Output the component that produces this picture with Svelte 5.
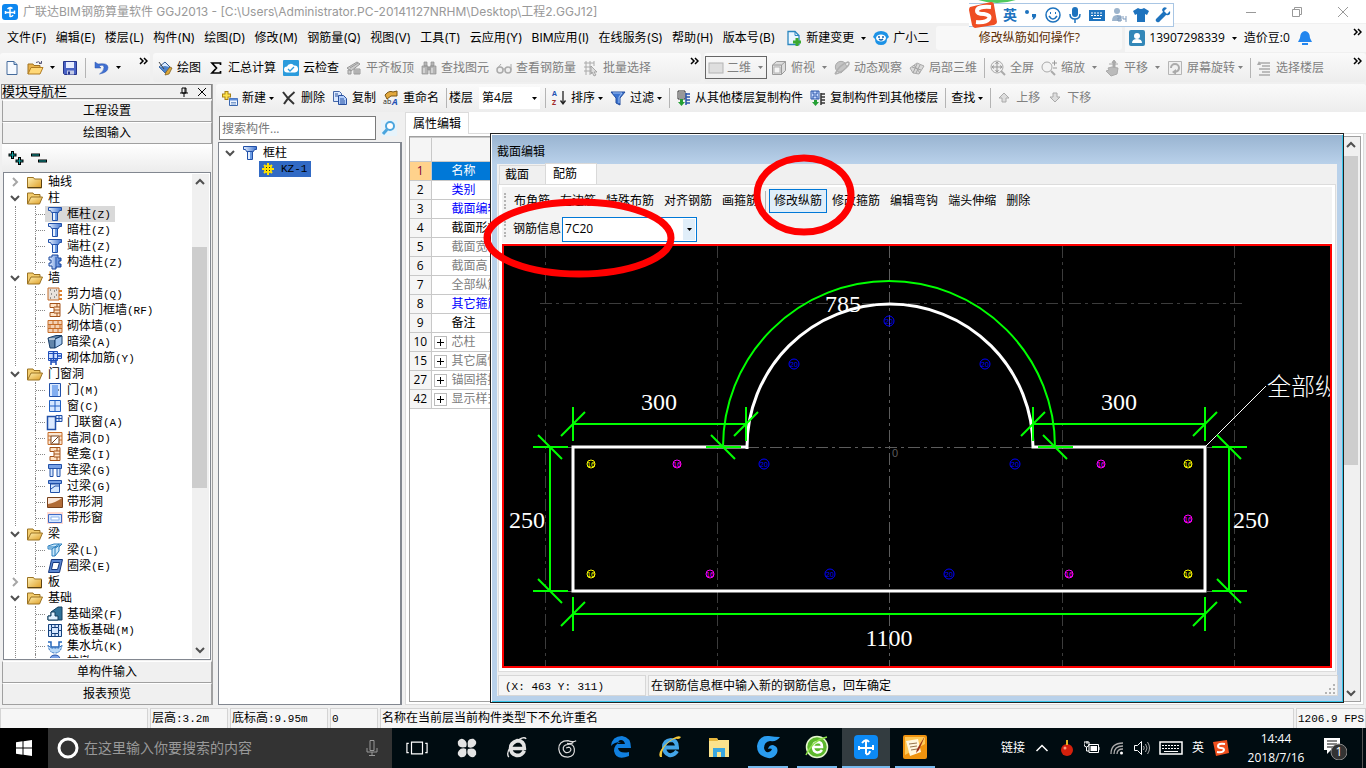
<script>
	let selected = $state('框柱');
	let bar = $state('7C20');
	let search = $state('');
	let tab = $state('配筋');
	let tool = $state('修改纵筋');

	const menus = ['文件(F)', '编辑(E)', '楼层(L)', '构件(N)', '绘图(D)', '修改(M)', '钢筋量(Q)', '视图(V)', '工具(T)', '云应用(Y)', 'BIM应用(I)', '在线服务(S)', '帮助(H)', '版本号(B)'];

	// drawn on a 16 x 16 grid
	const icons = {
		logo: '<rect width="16" height="16" rx="3" fill="#0d87f0"/><path d="M8 3v10M3.500 8.500h9M5.500 5Q8 2.500 10.500 4.500M12.500 6.500v3.500M3.500 7v3M8 12.500q2 .5 3-1.500" stroke="#fff" stroke-width="1.500" fill="none"/>',
		file: '<path d="M3 1.500h7l3 3v10H3z" fill="#f6faff" stroke="#456b9c"/><path d="M10 1.500v3h3" fill="#b9d3f0" stroke="#456b9c"/>',
		open: '<path d="M1 14V4h5l1 1.500h6V8" fill="#e8b24c" stroke="#a17220"/><path d="M1 14l3-6.500h12L13 14z" fill="#ffd877" stroke="#b17c22"/><path d="M9 2.500q3-2 5 1M12 3.500h2.500V1" stroke="#557" fill="none"/>',
		save: '<path d="M1.500 1.500h13v13h-12l-1-1z" fill="#4a63c4" stroke="#26358b"/><path d="M4 2h8v6H4z" fill="#e8edff"/><path d="M5 10.500h7v4H5z" fill="#c3cbe6"/><path d="M6 11.500h2v3H6z" fill="#26358b"/>',
		undo: '<path d="M2 2v6h6L6 6q5-2 5 1.500T6.500 14Q15 12.500 15 7.500T5 4z" fill="#3f6fd2" stroke="#2a55ae" stroke-width=".5"/>',
		draw: '<path d="M2 7l6-5 5 5-5 6z" fill="#dcecff" stroke="#325a94"/><path d="M2 7l6-1 5 1-5 6z" fill="#4d83cc"/><path d="M9 12l4-5 2 1-3 6-4 1z" fill="#ddaa3c" stroke="#775411" stroke-width=".7"/><path d="M2 2l5 7" stroke="#444"/>',
		sum: '<path d="M12.500 5V3H4l4.500 5L4 13h8.500v-2" fill="none" stroke="#000" stroke-width="1.700"/>',
		cloud: '<rect width="16" height="16" rx="1" fill="#2b9bdc"/><path d="M4 12.500a3 3 0 010-6 4 4 0 017-1 3.500 3.500 0 011 7z" fill="#fff"/><path d="M5 9l2 2 4-4" stroke="#2b9bdc" fill="none" stroke-width="1.300"/>',
		flush: '<path d="M1 8l10-6 3 2-9 7zM2 10h3v4H2zM8 9h6v5H8z" fill="#ccc" stroke="#999"/><path d="M4 8l8-5M9 11h4M9 13h4" stroke="#999"/>',
		binocular: '<path d="M3 2h3v4H3zM10 2h3v4h-3zM1 6h6v8H1zM9 6h6v8H9zM7 7h2v3H7z" fill="#b5b5b5" stroke="#8f8f8f" stroke-width=".7"/><path d="M3 8v5M11 8v5" stroke="#eee"/>',
		glasses: '<circle cx="4" cy="10" r="3" fill="#eee" stroke="#aaa" stroke-width="1.500"/><circle cx="12" cy="10" r="3" fill="#eee" stroke="#aaa" stroke-width="1.500"/><path d="M1 9l4-5M9 9h-2M15 10V4" stroke="#aaa" fill="none"/>',
		batch: '<path d="M1 3h10M1 7h8M1 11h7M3 1v14M7 1v14M11 1v5" stroke="#aaa"/><path d="M8 6l6 6h-3l2 3-2 1-2-4-1 2z" fill="#ddd" stroke="#999" stroke-width=".8"/>',
		plane: '<rect x="1" y="3" width="14" height="10" fill="#dedede" stroke="#b4b4b4"/>',
		cube: '<path d="M1.500 5l4-3.500h9v9l-4 4h-9zM1.500 5h9v9.500M10.500 5l4-3.500" fill="#ddd" stroke="#9b9b9b"/><path d="M3 7h6v6H3z" fill="#f5f5f5" stroke="#b4b4b4"/>',
		orbit: '<path d="M3 11a5 5 0 018-8l2 4-6 6z" fill="#c4c4c4" stroke="#aaa"/><path d="M1 14Q5 5 14 2q3 1-2 6T1 14" fill="none" stroke="#b0b0b0" stroke-width="1.500"/>',
		part3d: '<path d="M1 8l7-5 7 3-5 8-6-1z" fill="#d9d9d9" stroke="#aaa"/><path d="M5 5l6 8M8 4l-4 9M3 7l9 3M11 5l-4 8" stroke="#a3a3a3"/>',
		full: '<circle cx="7" cy="7" r="6" fill="#eee" stroke="#aaa"/><path d="M7 2v10M2 7h10M5.500 4L7 2l1.500 2M5.500 10L7 12l1.500-2M4 5.500L2 7l2 1.500M10 5.500L12 7l-2 1.500" stroke="#999" fill="none"/><path d="M11 11l4 4" stroke="#aaa" stroke-width="2"/>',
		zoom: '<circle cx="6" cy="7" r="5" fill="#f4f4f4" stroke="#aaa"/><path d="M10 11l4 4" stroke="#aaa" stroke-width="2"/><path d="M11 3h5M13.500.5v5M12 8h4" stroke="#999"/>',
		pan: '<path d="M4 8l4-1 6 1-1 6-6 2-5-5 3-1z" fill="#bbb" stroke="#aaa"/><path d="M10 0l2 2.500h-1V7H9V2.500H8zM5 4h9" fill="#aaa" stroke="#aaa"/>',
		rotate: '<path d="M1.500 1.500h13v13h-13z" fill="#f0f0f0" stroke="#b5b5b5"/><path d="M4 8a4 4 0 118 0q0 3-4 4" fill="none" stroke="#aaa" stroke-width="2"/><path d="M9 9v6l-4-3z" fill="#aaa"/>',
		floors: '<path d="M3 3h11M6 6h8M3 9h11M6 12h8M3 15h11" stroke="#aaa" stroke-width="1.500"/><path d="M1 5l2-4 2 4z" fill="#aaa"/>',
		create: '<path d="M4.500 1v9M0 5.500h9" stroke="#a78015" stroke-width="4"/><path d="M4.500 2v7M1 5.500h7" stroke="#ffe24d" stroke-width="2"/><path d="M7.500 8.500h8v7h-8z" fill="#eef5ff" stroke="#3a67ae"/><path d="M7.500 8.500h8v2h-8z" fill="#5f8dd8"/><path d="M9 12.500h5M9 14h5" stroke="#7d9dcc"/>',
		remove: '<path d="M2 2q4 6 11 12M13.500 2Q7 7 3 14" stroke="#333" stroke-width="2" fill="none"/>',
		copy: '<path d="M1.500 1.500h6l2 2v8h-8z" fill="#dbe9ff" stroke="#4668a9"/><path d="M6.500 5.500h5l3 3v6h-8z" fill="#b3cffc" stroke="#29509e"/><path d="M8 9h4M8 11h5M8 13h5M3 4h3M3 6h3" stroke="#29509e"/>',
		rename: '<path d="M2 5q4-5 8-3l4-1v5H8L4 9z" fill="#e3a93e" stroke="#7a5615"/><text x="0" y="14" font-size="7" fill="#222">ab</text><text x="9" y="15" font-size="9" font-weight="bold" font-style="italic" fill="#2352b4">A</text>',
		sort: '<text x="1" y="6" font-size="7" font-weight="bold" fill="#2352b4">A</text><text x="1" y="15" font-size="7" font-weight="bold" fill="#a02828">Z</text><path d="M12 1v12M9.500 10.500L12 14l2.500-3.500" stroke="#222" fill="none" stroke-width="1.300"/>',
		filter: '<path d="M1 2h14l-5 6v7l-4-2V8z" fill="#3a73d0" stroke="#234c9c"/><path d="M3 3h9L9 7v6" fill="none" stroke="#a2c4f5"/>',
		copyFrom: '<path d="M3 1h7v8H3z" fill="#fff" stroke="#333"/><path d="M4 3h5M4 5h5M4 7h5" stroke="#333"/><path d="M11 3v12M11 4h4M11 7h4M11 10h4M11 13h4" stroke="#2854a8" stroke-width="1.500"/><path d="M5 9h3v3h2l-3.500 4L3 12h2z" fill="#25a035"/>',
		copyTo: '<path d="M1 1h8v8H1z" fill="#c7d9ff" stroke="#2854a8"/><path d="M3 1v3h4V1M3 9V6h4v3" stroke="#2854a8" fill="none"/><path d="M11 3v12M11 4h4M11 7h4M11 10h4M11 13h4" stroke="#333" stroke-width="1.500"/><path d="M4 10h3v2h2l-3.500 4L2 12h2z" fill="#25a035"/>',
		up: '<path d="M8 3l5 5h-3v4H6V8H3z" fill="#ddd" stroke="#aaa"/>',
		down: '<path d="M8 12L3 7h3V3h4v4h3z" fill="#ddd" stroke="#aaa"/>',
		change: '<path d="M2 1.500h7l4 4v9H2z" fill="#eaf6ff" stroke="#2a86bf" stroke-width="1.300"/><path d="M9 1.500v4h4" fill="none" stroke="#2a86bf"/><path d="M11 8v8M7 12h8" stroke="#3caa30" stroke-width="3"/>',
		robot: '<path d="M2 3q6-4 12 0l2 4-2 2q0 6-6 6T2 9L0 7z" fill="#1c92e6"/><ellipse cx="8" cy="8" rx="5" ry="3.500" fill="#fff"/><path d="M5 7h2M9 7h2M6 9q2 2 4 0" stroke="#1464ad" fill="none" stroke-width="1.300"/>',
		user: '<rect width="16" height="16" rx="2" fill="#3387b8"/><circle cx="8" cy="6" r="3" fill="#fff"/><path d="M3 13q0-4 5-4t5 4z" fill="#fff"/>',
		bell: '<path d="M8 1q5 1 5 7l2 4H1l2-4q0-6 5-7z" fill="#2386ee"/><path d="M5 14h6" stroke="#2386ee" stroke-width="2"/>',
		search: '<rect width="16" height="16" fill="#e6f3fb"/><circle cx="9" cy="6" r="4" fill="#fff" stroke="#4aa5de" stroke-width="2"/><path d="M6 9.500L2 14" stroke="#4aa5de" stroke-width="3"/>',
		folder: '<path d="M.5 3.500h6l1 1.500h7v9H.5z" fill="url(#gold)" stroke="#9a7223"/><path d="M1 13.500h13.500V6" fill="none" stroke="#5b4212"/>',
		folderOpen: '<path d="M.5 14V3h5.500l1 1.500h6V7" fill="#f3cc6c" stroke="#9a7223"/><path d="M.5 14L4 7h11.500L12.500 14z" fill="url(#gold)" stroke="#9a7223"/>',
		column: '<path d="M1.500 1.500h13v3h-2l-1 2h-7l-1-2h-2z" fill="url(#steel)" stroke="#2150a8"/><path d="M5.500 6.500h5v8h-5z" fill="#e5f0ff" stroke="#2150a8"/><path d="M9 7v7" stroke="#6b9be3" stroke-width="2"/>',
		tie: '<path d="M5 1h6v3h3v3h-2v3h2v3H9v2H5v-3H2V9h2V6H2V3h3z" fill="url(#steel)" stroke="#16459c"/><path d="M9 3v11" stroke="#2150a8"/>',
		shear: '<path d="M1 2h11v12H1z" fill="#e9e2dc" stroke="#c66c28"/><path d="M3 4h1M7 5h1M4 8h1M9 9h1M3 12h1M7 11h1M9 4h1" stroke="#444"/><path d="M12 5h3M12 9h3M12 13h3" stroke="#dd802c" stroke-width="2"/>',
		frame: '<path d="M3 1.500h10v13H3v-4h4v-5H3z" fill="#ffe3c5" stroke="#a3531a"/><path d="M7 5h6M7 8h6M7 11h6M10 1v4M10 11v4" stroke="#a3531a"/>',
		brick: '<path d="M1 2.500h14v12H1z" fill="#f3d1b4" stroke="#c66c28"/><path d="M1 6.500h14M1 10.500h14M6 2v4M11 2v4M3 6v4M8 6v4M13 6v4M6 10v4M11 10v4" stroke="#c66c28"/>',
		hidden: '<path d="M1 4l8-2.500h6L8 5v9H3z" fill="#6285a9" stroke="#173c68"/><path d="M8 5l7-3v8l-7 4z" fill="#a4c7ee" stroke="#173c68"/><path d="M2 5h6" stroke="#fff"/>',
		mesh: '<path d="M1.500 3.500h13v5h-13zM1.500 1.500h9v9h-9z" fill="#cfe0ff" stroke="#1f4fbb"/><path d="M4 8v7M9 8v7M4 12h5M6.500 2v9M11 6h3" fill="none" stroke="#1f4fbb" stroke-width="1.500"/>',
		door: '<path d="M2.500 1.500h11v13h-11z" fill="#dceaff" stroke="#2150a8"/><path d="M5 3h6v11H5z" fill="#83aef0"/><path d="M11 8h1" stroke="#123"/>',
		window: '<path d="M2.500 2.500h11v11h-11zM8 2v11M2 8h11" fill="#d5e7ff" stroke="#1f5fc2"/>',
		doorWindow: '<path d="M.5 2.500h8v13h-8z" fill="#dceaff" stroke="#2150a8" stroke-width="1.500"/><path d="M9 1.500h6v6H9zM12 1v6M9 4.500h6" fill="#dceaff" stroke="#2150a8"/>',
		opening: '<path d="M1 2.500h14v12H1zM1 6h3M12 6h3M1 10h3M12 10h3" fill="#fae5d1" stroke="#c66c28"/><path d="M4 6h8v8H4zM5 13l6-6" stroke="#77401b" fill="#fff"/>',
		beamLink: '<path d="M1.500 2.500h13v4h-13z" fill="#7aa2e6" stroke="#2150a8"/><path d="M3 6.500h3v8H3zM10 6.500h3v8h-3z" fill="#d5e7ff" stroke="#2150a8"/>',
		lintel: '<path d="M1.500 2.500h13v3h-13z" fill="#7aa2e6" stroke="#2150a8"/><path d="M3.500 6h9v8.500h-9z" fill="#d5e7ff" stroke="#2150a8"/><path d="M4 11l4-3h4" stroke="#2150a8" fill="none"/>',
		stripHole: '<path d="M.5 3.500h15v10H.5z" fill="#fbe7d9" stroke="#77401b"/><path d="M1 10q7-1 14-6v9H1z" fill="#b06b37"/>',
		stripWindow: '<path d="M0 2h16v12H0z" fill="#ffd9d0"/><path d="M1.500 4.500h13v8h-13z" fill="#d5e7ff" stroke="#3c69c6"/><path d="M4 7h8v3H4z" fill="#fff" stroke="#90b5ee"/>',
		beam: '<path d="M1 4l6-2h8l-3 3v4l-4 5H5V7H1z" fill="#c9e8fb" stroke="#2a7ebd"/><path d="M5 7l7-5M8 14V6l5-3M2 5h8" stroke="#2a7ebd" fill="none"/>',
		ring: '<path d="M4.500 1.500h11l-3 13h-11z" fill="#5a86d0" stroke="#14367c"/><path d="M6 4.500h6.500l-2 7H4.500z" fill="#fff" stroke="#14367c"/>',
		footBeam: '<path d="M1 14v-4h3V6l7-5h4v13z" fill="#2f7197" stroke="#123f5e"/><path d="M1 14v-4h3V6h4v4h3v4z" fill="#e1f2ff" stroke="#123f5e"/>',
		raft: '<path d="M1.500 2.500h13v12h-13zM4.500 5.500h7v6h-7zM1 8.500h3M12 8.500h3M8 2v3M8 12v3M4.500 2v3M11.500 2v3M4.500 12v3M11.500 12v3" fill="#d5e7ff" stroke="#123f7c"/>',
		pit: '<path d="M1 4h3v5h8V4h3" fill="none" stroke="#2668bb" stroke-width="1.500"/><path d="M1 7q1 8 7 8t7-8l-3 3H4z" fill="#b8d9f8" stroke="#2668bb" stroke-dasharray="2 1"/>',
		pier: '<path d="M8 1q5 0 5 5v9H3V6q0-5 5-5z" fill="#7aa2e6" stroke="#2150a8"/>',
		sun: '<path d="M8 2v12M2 8h12M4 4l8 8M12 4l-8 8" stroke="#ffe100" stroke-width="2"/><circle cx="8" cy="8" r="4" fill="#ffe100"/><path d="M6 6h1v1H6zM9 6h1v1H9zM6 9h1v1H6zM9 9h1v1H9z" fill="#222"/>'
	};

	const mainTools = [
		{ icon: 'draw', text: '绘图' },
		{ icon: 'sum', text: '汇总计算' },
		{ icon: 'cloud', text: '云检查' },
		{ icon: 'flush', text: '平齐板顶', off: true },
		{ icon: 'binocular', text: '查找图元', off: true },
		{ icon: 'glasses', text: '查看钢筋量', off: true },
		{ icon: 'batch', text: '批量选择', off: true }
	];

	const viewTools = [
		{ icon: 'cube', text: '俯视', off: true, drop: true },
		{ icon: 'orbit', text: '动态观察', off: true },
		{ icon: 'part3d', text: '局部三维', off: true, sep: true },
		{ icon: 'full', text: '全屏', off: true },
		{ icon: 'zoom', text: '缩放', off: true, drop: true },
		{ icon: 'pan', text: '平移', off: true, drop: true },
		{ icon: 'rotate', text: '屏幕旋转', off: true, tight: true, sep: true },
		{ icon: 'floors', text: '选择楼层', off: true }
	];

	const editTools = [
		{ icon: 'create', text: '新建', tight: true },
		{ icon: 'remove', text: '删除' },
		{ icon: 'copy', text: '复制' },
		{ icon: 'rename', text: '重命名', sep: true }
	];

	const floorTools = [
		{ icon: 'sort', text: '排序', tight: true },
		{ icon: 'filter', text: '过滤', tight: true, sep: true },
		{ icon: 'copyFrom', text: '从其他楼层复制构件' },
		{ icon: 'copyTo', text: '复制构件到其他楼层', sep: true },
		{ text: '查找', tight: true, sep: true },
		{ icon: 'up', text: '上移', off: true },
		{ icon: 'down', text: '下移', off: true }
	];

	const tree = [
		{ name: '轴线' },
		{ name: '柱', items: [['框柱', 'Z', 'column'], ['暗柱', 'Z', 'column'], ['端柱', 'Z', 'column'], ['构造柱', 'Z', 'tie']] },
		{ name: '墙', items: [['剪力墙', 'Q', 'shear'], ['人防门框墙', 'RF', 'frame'], ['砌体墙', 'Q', 'brick'], ['暗梁', 'A', 'hidden'], ['砌体加筋', 'Y', 'mesh']] },
		{ name: '门窗洞', items: [['门', 'M', 'door'], ['窗', 'C', 'window'], ['门联窗', 'A', 'doorWindow'], ['墙洞', 'D', 'opening'], ['壁龛', 'I', 'frame'], ['连梁', 'G', 'beamLink'], ['过梁', 'G', 'lintel'], ['带形洞', '', 'stripHole'], ['带形窗', '', 'stripWindow']] },
		{ name: '梁', items: [['梁', 'L', 'beam'], ['圈梁', 'E', 'ring']] },
		{ name: '板' },
		{ name: '基础', items: [['基础梁', 'F', 'footBeam'], ['筏板基础', 'M', 'raft'], ['集水坑', 'K', 'pit'], ['柱墩', 'Y', 'pier']] }
	];

	const props = [
		[1, '名称', 'active'],
		[2, '类别', 'key'],
		[3, '截面编辑', 'key'],
		[4, '截面形状', ''],
		[5, '截面宽', 'dim'],
		[6, '截面高', 'dim'],
		[7, '全部纵筋', 'dim'],
		[8, '其它箍筋', 'key'],
		[9, '备注', ''],
		[10, '芯柱', 'dim', true],
		[15, '其它属性', 'dim', true],
		[27, '锚固搭接', 'dim', true],
		[42, '显示样式', 'dim', true]
	];

	const barTools = ['布角筋', '左边筋', '特殊布筋', '对齐钢筋', '画箍筋', '修改纵筋', '修改箍筋', '编辑弯钩', '端头伸缩', '删除'];

	// x, y, colour, diameter
	const rebars = [
		[591, 464, '#ff0', 16], [677, 464, '#f0f', 16], [764, 464, '#00f', 20],
		[591, 574, '#ff0', 16], [710, 574, '#f0f', 16], [830, 574, '#00f', 20],
		[949, 574, '#00f', 20], [1069, 574, '#f0f', 16], [1188, 574, '#ff0', 16],
		[1015, 464, '#00f', 20], [1101, 464, '#f0f', 16], [1188, 464, '#ff0', 16],
		[1188, 519, '#f0f', 16], [794, 364, '#00f', 20], [889, 321, '#00f', 20], [985, 364, '#00f', 20]
	];

	const ticksAcross = [[573, 424], [746, 424], [1033, 424], [1205, 424], [573, 614], [1205, 614]];
	const ticksDown = [[550, 447], [723, 447], [1055, 447], [1229, 447], [550, 591], [1229, 591]];

	// 24 x 24 grid
	const pinned = [
		['任务视图', '<path d="M6 5.500h12v13H6zM3 7H1v10h2M21 7h2v10h-2" fill="none" stroke="#fff" stroke-width="1.300"/>'],
		['四叶草', '<path d="M11 11Q1 13 2 5q3-5 7-2 4 3 2 8zM13 11Q11 1 19 2q5 3 2 7-3 4-8 2zM13 13q10-2 9 6-3 5-7 2-4-3-2-8zM11 13q2 10-6 9-5-3-2-7 3-4 8-2z" fill="#e4e4e4"/>'],
		['浏览器', '<path d="M20 15q-3 6-9 5-6-2-6-8t7-8q8 0 8 8.500H6" fill="none" stroke="#e4e4e4" stroke-width="4"/><path d="M3 22Q-1 16 9 7T22 2" fill="none" stroke="#e4e4e4" stroke-width="1.500"/>'],
		['G', '<path d="M22 4q-4 2-9 0-10 0-10 9 1 9 10 9 8-1 7-9-1-6-7-5-6 1-5 6 2 5 7 2 3-3-1-5l-3 1M19 6q-3 2-7 1" fill="none" stroke="#ddd" stroke-width="1.300"/>']
	];
	const running = [
		['Edge', '<path d="M2 11Q3 1 13 1q9 1 9 12H9q1 6 11 4v4Q7 26 5 16 5 9 12 7q-7 0-10 4zm7-2h7q-1-4-4-4t-3 4z" fill="#1080e0"/>'],
		['IE', '<path d="M19 16q-3 5-8 4-5-2-5-8t7-7q6 0 6 7.500H7" fill="none" stroke="#43a5e8" stroke-width="4"/><path d="M2 22Q-1 17 9 8T23 2q-1 2-3 2-5-1-11 5T4 22z" fill="#f6c93a"/>'],
		['文件夹', '<path d="M2 3h8l1 2h11v17H2z" fill="#fbe38c"/><path d="M2 3h8l1 3H2z" fill="#e7b73d"/><path d="M6 22v-9h12v9h-4v-5h-4v5z" fill="#3aa7e0"/>'],
		['广联达', '<path d="M24 2q-3 5-10 4-6 1-6 7 1 5 5 4 2 0 3-3-2-1-4 0 1-4 5-4 6 2 4 8-3 6-9 5Q1 21 1 11 3 0 13 1q6 1 11 1z" fill="#2a9df0"/>', 'open'],
		['360', '<circle cx="12" cy="12" r="10.500" fill="#5cb82c" stroke="#e4f6cf" stroke-width="1.500"/><path d="M17 15q-2 3-5 2.500-4-1-4-5.500t5-5q4 0 4 5H8" fill="none" stroke="#fff" stroke-width="2.500"/><path d="M1 20Q8 5 22 2" fill="none" stroke="#8de04c" stroke-width="1.500"/>', 'open'],
		['GGJ', '<rect width="24" height="24" rx="4" fill="#0c8af5"/><path d="M12 5v14M5 13h14M8 8q4-5 7-1M19 10v5M5 11v4M12 19q3 1 4-3" fill="none" stroke="#fff" stroke-width="2"/>', 'open front'],
		['便笺', '<rect width="24" height="24" rx="2" fill="#ef930f"/><path d="M2 2h20v7L2 20z" fill="#ffc957"/><path d="M3 6l12-2 3 13-11 4z" fill="#fff7df"/><path d="M6 9l8-1M7 12l7-1M8 15l6-1" stroke="#96744d"/><path d="M22 1L14 14l-1 4 3-3z" fill="#9c3015"/>', 'open']
	];
</script>

{#snippet glyph(name)}
	<svg class="glyph" viewBox="0 0 16 16" aria-hidden="true">{@html icons[name]}</svg>
{/snippet}

{#snippet caret()}
	<svg class="caret" viewBox="0 0 5 3" aria-hidden="true"><path d="M0 0h5L2.500 3z" fill="currentColor" /></svg>
{/snippet}

{#snippet chevron(d)}
	<svg class="chevron" viewBox="0 0 16 16" aria-hidden="true"><path {d} fill="none" stroke="#505050" stroke-width="2" /></svg>
{/snippet}

{#snippet more()}
	<button class="more" aria-label="更多"><svg viewBox="0 0 9 8"><path d="M1 1l3 3-3 3M5 1l3 3-3 3" fill="none" stroke="#000" stroke-width="1.500" /></svg></button>
{/snippet}

{#snippet tools(list)}
	{#each list as t}
		<button class="tool" class:off={t.off}>
			{#if t.icon}{@render glyph(t.icon)}{/if}
			<span>{t.text}</span>
			{#if t.drop || t.tight}<i class:tight={t.tight}>{@render caret()}</i>{/if}
		</button>
		{#if t.sep}<span class="sep"></span>{/if}
	{/each}
{/snippet}

<svg class="defs" aria-hidden="true">
	<linearGradient id="gold" x2="1" y2="1"><stop stop-color="#fff1b4" /><stop offset="1" stop-color="#dd9d24" /></linearGradient>
	<linearGradient id="steel" x2="1"><stop stop-color="#e6f0ff" /><stop offset="1" stop-color="#3f74cf" /></linearGradient>
</svg>

<div class="app">
	<header class="title">
		{@render glyph('logo')}
		<h1>广联达BIM钢筋算量软件 GGJ2013 - [C:\Users\Administrator.PC-20141127NRHM\Desktop\工程2.GGJ12]</h1>
		<div class="window-buttons">
			<button aria-label="最小化"><svg viewBox="0 0 12 12"><path d="M1 6.500h10" /></svg></button>
			<button aria-label="还原"><svg viewBox="0 0 12 12"><path d="M1.500 3.500h7v7h-7zM3.500 3.500v-2h7v7h-2" /></svg></button>
			<button aria-label="关闭"><svg viewBox="0 0 12 12"><path d="M1 1l10 10M11 1L1 11" /></svg></button>
		</div>
		<div class="ime">
			<svg class="sogou" viewBox="0 0 28 26" aria-hidden="true">
				<circle cx="28" cy="-59" r="60" fill="#4fc95d" />
				<path d="M1 5l21-5q3 0 3 3l3 17q0 2-3 3L6 26q-2 0-3-3L0 8q0-2 1-3z" fill="#ef4e23" />
				<path d="M22 5Q8 4 8 9q0 3 7 3 7 1 5 5-3 4-13 3" fill="none" stroke="#fff" stroke-width="4" />
			</svg>
			<b>英</b>
			<svg viewBox="0 0 16 16"><circle cx="4" cy="5" r="2" /><path d="M9 7h4q1 4-4 6 2-3 0-3z" /></svg>
			<svg viewBox="0 0 16 16"><circle cx="8" cy="8" r="7" fill="none" stroke="#1e73be" stroke-width="1.500" /><path d="M5 5h1v2H5zM10 5h1v2h-1z" /><path d="M4 9q4 6 8 0" fill="none" stroke="#1e73be" stroke-width="1.500" /></svg>
			<svg viewBox="0 0 16 16"><rect x="5" y="0" width="6" height="10" rx="3" /><path d="M3 7q0 5 5 5t5-5M8 12v4" fill="none" stroke="#1e73be" stroke-width="1.500" /></svg>
			<svg viewBox="0 0 16 16"><path d="M0 3h16v11H0z" /><path d="M2 6h12M2 8.500h12" stroke="#fff" stroke-dasharray="2 1" /><path d="M4 11.500h8" stroke="#fff" /></svg>
			<svg viewBox="0 0 16 16"><circle cx="6" cy="4" r="3" fill="#9db4cc" /><path d="M1 14q0-6 5-6t5 6z" fill="#9db4cc" /><path d="M6 9h4v2H7v3h3M12 9v3h3V9M15 12v3" fill="none" stroke="#7e9abb" /></svg>
			<svg viewBox="0 0 16 16"><path d="M5 1q3 2 6 0l5 3-2 4-2-1v8H4V7L2 8 0 4z" /></svg>
			<svg viewBox="0 0 16 16"><path d="M15 4l-3 3-3-3 3-3Q8-1 7 3l1 2-7 7q-1 2 1 3t3-1l6-6q5 1 4-4z" /></svg>
		</div>
	</header>

	<nav class="menus">
		<div class="menu-list">
			{#each menus as m}<button>{m}</button>{/each}
		</div>
		<button class="tool change">{@render glyph('change')}<span>新建变更</span><i>{@render caret()}</i></button>
		<button class="tool">{@render glyph('robot')}<span>广小二</span></button>
		<a class="tip" href="#help">修改纵筋如何操作?</a>
		<div class="account">
			<button class="tool">{@render glyph('user')}<span>13907298339</span><i>{@render caret()}</i></button>
			<span class="beans">造价豆:0</span>
			{@render glyph('bell')}
			{@render more()}
		</div>
	</nav>

	<div class="toolbars">
		<div class="strip files">
			<button aria-label="新建工程">{@render glyph('file')}</button>
			<button aria-label="打开">{@render glyph('open')}{@render caret()}</button>
			<button aria-label="保存">{@render glyph('save')}</button>
			<span class="sep"></span>
			<button aria-label="撤销">{@render glyph('undo')}{@render caret()}</button>
			{@render more()}
		</div>
		<div class="strip main-tools">{@render tools(mainTools)}{@render more()}</div>
		<div class="strip view-tools">
			<label class="view-mode">
				{@render glyph('plane')}
				<select aria-label="视图模式"><option>二维</option></select>
				{@render caret()}
			</label>
			{@render tools(viewTools)}
			{@render more()}
		</div>
	</div>

	<main>
		<aside>
			<div class="aside-title">
				<span>模块导航栏</span>
				<button aria-label="固定"><svg viewBox="0 0 10 10"><path d="M3 1h4v5H3zM1 6h8M5 6v4M6 1v5" fill="none" stroke="#000" /></svg></button>
				<button aria-label="关闭"><svg viewBox="0 0 10 10"><path d="M1 1l8 8M9 1L1 9" fill="none" stroke="#000" /></svg></button>
			</div>
			<button class="section">工程设置</button>
			<button class="section">绘图输入</button>
			<div class="tree-tools">
				<button aria-label="全部展开"><svg viewBox="0 0 16 16"><path d="M4.500 1v8M.5 5h8M11.500 7v8M7.500 11h8" stroke="#000" stroke-width="3" /><path d="M4.500 2v6M1.500 5h6M11.500 8v6M8.500 11h6" stroke="#12a5a5" /></svg></button>
				<button aria-label="全部折叠"><svg viewBox="0 0 16 16"><path d="M0 5h9M7 11h9" stroke="#000" stroke-width="3" /><path d="M1 5h7M8 11h7" stroke="#12a5a5" /></svg></button>
			</div>
			<div class="tree-box">
				<ul class="tree">
					{#each tree as group}
						<li>
							<div class="row">
								{#if group.items}
									{@render chevron('M4 6l4 4 4-4')}{@render glyph('folderOpen')}
								{:else}
									<svg class="chevron" viewBox="0 0 16 16"><path d="M6 4l4 4-4 4" fill="none" stroke="#a6a6a6" stroke-width="2" /></svg>{@render glyph('folder')}
								{/if}
								<span class="name">{group.name}</span>
							</div>
							{#if group.items}
								<ul>
									{#each group.items as [name, key, icon]}
										<li>
											<button class="leaf" class:selected={selected === name} onclick={() => selected = name}>
												{@render glyph(icon)}
												<span class="name">{name}{#if key}<small>({key})</small>{/if}</span>
											</button>
										</li>
									{/each}
								</ul>
							{/if}
						</li>
					{/each}
				</ul>
				<div class="scroll">
					{@render chevron('M4 10l4-4 4 4')}
					<span class="thumb tree-thumb"></span>
					{@render chevron('M4 6l4 4 4-4')}
				</div>
			</div>
			<button class="section">单构件输入</button>
			<button class="section">报表预览</button>
		</aside>

		<div class="work">
			<div class="strip edit-tools">
				{@render tools(editTools)}
				<label class="floor">
					楼层
					<span class="combo"><select><option>第4层</option></select>{@render caret()}</span>
				</label>
				<span class="sep"></span>
				{@render tools(floorTools)}
			</div>

			<div class="panes">
				<section class="components">
					<div class="search">
						<input bind:value={search} placeholder="搜索构件..." aria-label="搜索构件" />
						<button aria-label="搜索">{@render glyph('search')}</button>
					</div>
					<div class="component-tree">
						<div class="row">{@render chevron('M4 6l4 4 4-4')}{@render glyph('column')}<span class="name">框柱</span></div>
						<button class="instance">{@render glyph('sun')}<small>KZ-1</small></button>
					</div>
				</section>

				<section class="properties">
					<div class="tab-bar"><button>属性编辑</button></div>
					<div class="sheet">
						<div class="grid">
							<table>
								<thead><tr><th></th><th></th></tr></thead>
								<tbody>
									{#each props as [no, name, kind, group]}
										<tr class={kind}>
											<th scope="row">{no}</th>
											<td><span class="plus">{#if group}<button aria-label="展开"><svg viewBox="0 0 11 11"><path d="M2 5.500h7M5.500 2v7" stroke="#000" /></svg></button>{/if}</span>{name}</td>
										</tr>
									{/each}
								</tbody>
							</table>
							<div class="scroll">
								{@render chevron('M4 10l4-4 4 4')}
								<span class="thumb grid-thumb"></span>
								{@render chevron('M4 6l4 4 4-4')}
							</div>
						</div>
					</div>

					<div class="dialog" role="dialog" aria-labelledby="dialog-title">
						<h2 id="dialog-title">截面编辑</h2>
						<div class="client">
							<div class="tabs">
								{#each ['截面', '配筋'] as t}
									<button class:on={tab === t} onclick={() => tab = t}>{t}</button>
								{/each}
							</div>
							<div class="page">
								<div class="bar-tools">
									<span class="grip"></span>
									{#each barTools as t}
										{#if t === '修改纵筋'}<span class="sep"></span>{/if}
										<button class:on={tool === t} onclick={() => tool = t}>{t}</button>
									{/each}
								</div>
								<div class="bar-info">
									<span class="grip"></span>
									<label for="bar">钢筋信息</label>
									<div class="bar-input">
										<input id="bar" bind:value={bar} />
										<button aria-label="展开列表">{@render caret()}</button>
									</div>
								</div>
								<svg class="canvas" viewBox="504 246 826 420" preserveAspectRatio="xMidYMid slice">
									<g fill="none" stroke="#3c3c3c" stroke-dasharray="12 4 3 4">
										<path d="M545.500 246v420M717.500 246v420M1062.500 246v420M1234.500 246v420M540 303.500h704" />
										<path d="M889.500 246v420M540 447.500h704M540 591.500h704" stroke="#5c5c5c" />
									</g>
									<text class="origin" x="892" y="457">0</text>
									<path d="M747 447H573v144h632V447h-172A143 143 0 00747 447v2" fill="none" stroke="#fff" stroke-width="3" />
									<path d="M1206 446l60-60" stroke="#fff" />
									<g fill="none" stroke="#0f0" stroke-width="2">
										<path d="M723 447A166 166 0 011055 447M573 424h173M1033 424h172M573 614h632M550 447v144M1229 447v144" />
										{#each ticksAcross as [x, y]}
											<path d="M{x} {y - 17}v34M{x - 12} {y + 12}l24-24" />
										{/each}
										{#each ticksDown as [x, y]}
											<path d="M{x - 17} {y}h35M{x - 12} {y - 12}l24 24" />
										{/each}
									</g>
									{#each rebars as [x, y, color, size]}
										<circle cx={x} cy={y} r={size === 20 ? 5 : 4} fill="none" stroke={color} />
										<text class="size" {x} y={y + 3} fill={color}>{size}</text>
									{/each}
									<g class="dims">
										<text x="843" y="312">785</text>
										<text x="659" y="410">300</text>
										<text x="1119" y="410">300</text>
										<text x="527" y="528">250</text>
										<text x="1251" y="528">250</text>
										<text x="889" y="646">1100</text>
										<text class="note" x="1267" y="395">全部纵筋</text>
									</g>
								</svg>
							</div>
							<div class="dialog-status">
								<span class="cell"><small>(X: 463 Y: 311)</small></span>
								<span class="cell">在钢筋信息框中输入新的钢筋信息，回车确定</span>
								<svg class="resize" viewBox="0 0 12 12" aria-hidden="true"><path d="M9 1h2M9 5h2M5 5h2M9 9h2M5 9h2M1 9h2" stroke="#b4b4b4" stroke-width="2" /></svg>
							</div>
						</div>
						<svg class="marks" viewBox="0 0 400 160" aria-hidden="true">
							<ellipse cx="89" cy="105" rx="92" ry="36" />
							<ellipse cx="314" cy="62" rx="47" ry="37" />
						</svg>
					</div>
				</section>
			</div>
		</div>
	</main>

	<footer class="status">
		<span></span>
		<span>层高<small>:3.2m</small></span>
		<span>底标高<small>:9.95m</small></span>
		<span><small>0</small></span>
		<span>名称在当前层当前构件类型下不允许重名</span>
		<span><small>1206.9 FPS</small></span>
	</footer>

	<div class="taskbar">
		<button class="start" aria-label="开始"><svg viewBox="0 0 16 16"><path d="M0 2.300l6.500-1v6.200H0zM7.500 1.200L16 0v7.500H7.500zM0 8.500h6.500v6.200l-6.500-1zM7.500 8.500H16V16l-8.500-1.200z" fill="#fff" /></svg></button>
		<label class="cortana">
			<svg class="ring" viewBox="0 0 24 24"><circle cx="12" cy="12" r="9" fill="none" stroke="#fff" stroke-width="3" /></svg>
			<input placeholder="在这里输入你要搜索的内容" aria-label="搜索" />
			<svg class="mic" viewBox="0 0 12 16"><path d="M4 .5h4v10H4zM1 8v4h10V8M6 12v3.500M3 15.500h6" fill="none" stroke="#999" /></svg>
		</label>
		<div class="pinned">
			{#each pinned as [name, shape]}
				<button aria-label={name}><svg viewBox="0 0 24 24">{@html shape}</svg></button>
			{/each}
		</div>
		<div class="running">
			{#each running as [name, shape, state]}
				<button class={state} aria-label={name}><svg viewBox="0 0 24 24">{@html shape}</svg></button>
			{/each}
		</div>
		<div class="tray">
			<span>链接</span>
			<svg viewBox="0 0 16 16"><path d="M2.500 11L8 5.500l5.500 5.500" fill="none" stroke="#fff" stroke-width="1.500" /></svg>
			<svg viewBox="0 0 16 16"><circle cx="8" cy="10" r="6" fill="#d4200c" /><path d="M8 5V0" stroke="#e6b422" stroke-width="2" /><circle cx="6" cy="8" r="1.500" fill="#ff9a80" /></svg>
			<svg viewBox="0 0 16 16"><path d="M5 4.500h9.500v8H5zM15 7v3M3 1v3M0 2h5v2Q5 7 2.500 7 0 7 0 4zM2.500 7v4H5" fill="none" stroke="#fff" /><path d="M6.500 6H13v5H6.500z" fill="#fff" /></svg>
			<svg viewBox="0 0 16 16"><path d="M2 14Q2 3 14 3M5 14q0-8 9-8M8 14q0-5 6-5" fill="none" stroke="#aaa" stroke-width="1.300" /><circle cx="12.500" cy="13" r="1.500" fill="#fff" /></svg>
			<svg viewBox="0 0 16 16"><path d="M.5 5.500h3l4-4v13l-4-4h-3z" fill="none" stroke="#fff" /><path d="M9.500 6q1.500 2 0 4M11.500 4q3 4 0 8M13.500 2q4 6 0 12" fill="none" stroke="#aaa" /></svg>
			<svg class="keys" viewBox="0 0 24 14"><path d="M1 1h22v12H1z" fill="none" stroke="#fff" stroke-width="1.500" /><path d="M3 4.500h18M3 7.500h18" stroke="#fff" stroke-dasharray="2 1" /><path d="M5 10.500h14" stroke="#fff" /></svg>
			<span>英</span>
			<svg viewBox="0 0 16 16"><path d="M0 2l14-2 2 13-13 3z" fill="#f0501e" /><path d="M12 4Q5 3 5 6q0 2 3 2t3 2q-1 3-7 2" fill="none" stroke="#fff" stroke-width="2" /></svg>
			<time>14:44<br />2018/7/16</time>
			<button class="notice" aria-label="通知"><svg viewBox="0 0 24 24"><path d="M1 2h16v12H8l-4 4v-4H1z" fill="#fff" /><path d="M4 5h10M4 8h10M4 11h10" stroke="#111" /><circle cx="16" cy="16" r="8" fill="#333" stroke="#888" /><text x="16" y="20" fill="#fff" font-size="12" text-anchor="middle">1</text></svg></button>
		</div>
	</div>
</div>

<style>
	:global(body) {
		margin: 0;
		background: #f0f0f0;
	}

	.app {
		display: flex;
		flex-direction: column;
		height: 100vh;
		overflow: hidden;
		font: 12px/16px "Open Sans", "Noto Sans CJK SC", sans-serif;
		color: #000;
		white-space: nowrap;
	}

	.app :global(*) { box-sizing: border-box; }

	button {
		display: flex;
		align-items: center;
		margin: 0;
		padding: 0;
		border: 0;
		background: none;
		font: inherit;
		color: inherit;
	}

	input, select {
		min-width: 0;
		margin: 0;
		padding: 0;
		border: 0;
		outline: 0;
		border-radius: 0;
		background: none;
		font: inherit;
		color: inherit;
		appearance: none;
	}

	ul {
		margin: 0;
		padding: 0;
		list-style: none;
	}

	svg {
		display: block;
		flex: none;
	}

	small { font: 11px/16px "Liberation Mono", monospace; }

	.defs {
		position: absolute;
		width: 0;
		height: 0;
	}

	.glyph, .chevron {
		width: 16px;
		height: 16px;
		overflow: visible;
	}

	.caret {
		width: 5px;
		height: 3px;
	}

	/* title */
	.title {
		position: relative;
		display: flex;
		flex: none;
		align-items: center;
		gap: 5px;
		height: 23px;
		padding-left: 2px;
		background: #fff;
	}

	h1 {
		flex: 1;
		margin: 0;
		font: 12px/16px Inter, "Noto Sans CJK SC", sans-serif;
		color: #999;
	}

	.window-buttons { display: flex; }

	.window-buttons button {
		justify-content: center;
		width: 46px;
		height: 22px;
	}

	.window-buttons svg {
		width: 12px;
		height: 12px;
		fill: none;
		stroke: #999;
	}

	.ime {
		position: absolute;
		top: 3px;
		right: 192px;
		display: flex;
		align-items: center;
		gap: 6px;
		height: 24px;
		padding-right: 2px;
		border: 1px solid #a9c6e4;
		border-left: 0;
		background: #fff;
		color: #1e73be;
		z-index: 1;
	}

	.ime svg {
		width: 16px;
		height: 16px;
		fill: #1e73be;
	}

	.ime .sogou {
		width: 28px;
		height: 26px;
		overflow: visible;
	}

	.ime b { font-size: 14px; }

	/* menus and tool strips */
	.menus {
		display: flex;
		flex: none;
		align-items: center;
		height: 30px;
		padding-left: 7px;
	}

	.menu-list {
		display: flex;
		gap: 9px;
		font-family: Inter, "Noto Sans CJK SC", sans-serif;
	}

	.tool {
		height: 24px;
		margin-right: 7px;
	}

	.tool .glyph { margin-right: 4px; }

	.tool i {
		width: 12px;
		padding-left: 7px;
	}

	.tool i.tight {
		width: 8px;
		padding-left: 3px;
	}

	.change { margin-left: 11px; }

	.tip {
		width: 186px;
		padding: 4px 0;
		border-radius: 3px;
		background: #f8f8f8;
		color: #5c2c00;
		text-align: center;
		text-decoration: none;
	}

	.account {
		display: flex;
		flex: 1;
		align-items: center;
		height: 28px;
		margin-left: 3px;
		padding: 0 4px;
		background: #f8f8f8;
	}

	.beans { margin-right: 7px; }

	.more {
		align-self: flex-start;
		margin: 4px 0 0 auto;
	}

	.more svg {
		width: 9px;
		height: 8px;
	}

	.toolbars {
		display: flex;
		flex: none;
		gap: 3px;
		height: 30px;
		padding-bottom: 1px;
	}

	.strip {
		display: flex;
		align-items: center;
		border-radius: 3px;
		background: linear-gradient(#fafafa, #ededed);
	}

	.sep {
		width: 1px;
		height: 20px;
		margin-right: 5px;
		background: #b4b4b4;
	}

	.files {
		width: 150px;
		padding: 0 2px 0 4px;
		gap: 7px;
	}

	.files button { gap: 7px; }
	.files .sep { margin: 0; }

	.main-tools {
		width: 548px;
		padding: 0 2px 0 4px;
	}

	.view-tools {
		flex: 1;
		padding: 0 4px 0 1px;
	}

	.off { color: #808080; }

	.view-mode {
		display: flex;
		align-items: center;
		width: 62px;
		height: 23px;
		margin-right: 4px;
		padding: 0 3px 0 2px;
		border: 1px solid #666;
		color: #808080;
	}

	.view-mode select {
		flex: 1;
		margin-left: 3px;
	}

	/* left panel */
	main {
		display: flex;
		flex: 1;
		gap: 3px;
		min-height: 0;
		padding: 1px 0 3px;
	}

	aside {
		display: flex;
		flex: none;
		flex-direction: column;
		width: 213px;
		padding: 0 0 0 1px;
		border-right: 1px solid #a0a0a0;
	}

	.aside-title {
		display: flex;
		align-items: center;
		gap: 8px;
		height: 15px;
		margin-bottom: 1px;
		padding-right: 4px;
		border: 1px solid #888;
		font-size: 13px;
		line-height: 13px;
	}

	.aside-title span { flex: 1; }

	.aside-title svg {
		width: 10px;
		height: 10px;
	}

	.section {
		flex: none;
		justify-content: center;
		height: 22px;
		margin-left: 1px;
		border: 1px solid #a0a0a0;
		border-top-color: #fff;
		background: #f0f0f0;
	}

	.tree-tools {
		display: flex;
		flex: none;
		gap: 7px;
		height: 28px;
		margin-left: 1px;
		padding-left: 6px;
		background: linear-gradient(#fff, #ececec);
	}

	.tree-tools svg {
		width: 16px;
		height: 16px;
	}

	.tree-box {
		display: flex;
		flex: 1;
		min-height: 0;
		margin: 0 1px 1px 2px;
		padding: 1px;
		border: 1px solid #828790;
		background: #fff;
	}

	.tree {
		flex: 1;
		overflow: hidden;
	}

	.row {
		display: flex;
		align-items: center;
		height: 16px;
	}

	.tree .row { padding-left: 2px; }

	.row .glyph { margin-left: 4px; }

	.name { padding: 0 5px; }

	.tree ul {
		margin-left: 10px;
		padding-left: 19px;
		border-left: 1px dotted #888;
	}

	.tree ul li {
		display: flex;
		align-items: center;
		border-left: 1px dotted #888;
	}

	.tree ul li::before {
		content: "";
		width: 9px;
		border-top: 1px dotted #888;
	}

	.leaf {
		height: 16px;
		padding-left: 2px;
	}

	.leaf.selected { background: #d9d9d9; }

	.leaf .name { padding: 0 4px; }

	.scroll {
		display: flex;
		flex: none;
		flex-direction: column;
		justify-content: space-between;
		width: 17px;
		background: #f0f0f0;
	}

	.thumb {
		width: 15px;
		background: #cdcdcd;
	}

	.tree-thumb {
		height: 241px;
		margin: 57px 0 auto;
	}

	/* work area */
	.work {
		display: flex;
		flex: 1;
		flex-direction: column;
		min-width: 0;
	}

	.edit-tools {
		flex: none;
		height: 28px;
		padding-left: 6px;
	}

	.floor {
		display: flex;
		align-items: center;
		gap: 6px;
		margin-left: -3px;
	}

	.combo {
		display: flex;
		align-items: center;
		width: 61px;
		height: 22px;
		margin-right: 5px;
		padding: 0 3px;
		background: #fff;
	}

	.combo select { flex: 1; }

	.panes {
		display: flex;
		flex: 1;
		gap: 3px;
		min-height: 0;
	}

	.components {
		display: flex;
		flex: none;
		flex-direction: column;
		width: 186px;
		padding-left: 2px;
	}

	.search {
		display: flex;
		align-items: center;
		gap: 5px;
		height: 30px;
		padding: 2px 0 0 1px;
	}

	.search input {
		width: 157px;
		height: 24px;
		padding: 0 2px;
		border: 1px solid #7a7a7a;
		background: #fff;
	}

	.search input::placeholder { color: #777; }

	.component-tree {
		flex: 1;
		padding: 2px 3px;
		border: 1px solid #828790;
		border-right-width: 2px;
		background: #fff;
	}

	.instance {
		gap: 5px;
		height: 16px;
		margin-left: 37px;
		padding: 0 4px 0 1px;
		background: #316ac5;
	}

	/* properties */
	.properties {
		position: relative;
		display: flex;
		flex: 1;
		flex-direction: column;
		min-width: 0;
	}

	.tab-bar {
		display: flex;
		height: 22px;
		border-bottom: 1px solid #dcdcdc;
		background: #fff;
	}

	.tab-bar button {
		height: 22px;
		padding: 0 7px;
		border: 1px solid #dcdcdc;
		border-bottom: 0;
		background: #fff;
	}

	.sheet {
		display: flex;
		flex: 1;
		min-height: 0;
		margin-right: 2px;
		padding: 2px 2px 2px 3px;
		border: 1px solid #dcdcdc;
		border-top: 0;
		background: #fff;
	}

	.grid {
		display: flex;
		flex: 1;
		border: 1px solid #a0a0a0;
	}

	table {
		flex: 1;
		align-self: flex-start;
		border-collapse: collapse;
		table-layout: fixed;
	}

	thead th { height: 24px; }

	th {
		width: 21px;
		padding: 0;
		border: 1px solid #c8c8c8;
		border-left: 0;
		background: #f5f5f5;
		font-weight: normal;
	}

	thead th:last-child { width: auto; }

	tbody tr { height: 19px; }

	td {
		padding: 0;
		border: 1px solid #c8c8c8;
		line-height: 16px;
	}

	.plus {
		display: inline-block;
		width: 20px;
		padding-left: 2px;
		vertical-align: top;
	}

	.plus button {
		justify-content: center;
		width: 13px;
		height: 13px;
		margin-top: 2px;
		border: 1px solid #bbb;
	}

	.plus svg {
		width: 11px;
		height: 11px;
	}

	.active th {
		background: #ffd28c;
		color: #80003c;
	}

	.active td {
		background: #0078d7;
		color: #fff;
	}

	.key td { color: #00f; }
	.dim td { color: #808080; }

	.grid-thumb {
		height: 309px;
		margin: 3px 0 auto;
	}

	/* section dialog */
	.dialog {
		position: absolute;
		top: 21px;
		right: 22px;
		bottom: 2px;
		left: 85px;
		display: flex;
		flex-direction: column;
		padding: 0 6px 6px;
		border: 1px solid #222;
		background: #b9d1ea;
		box-shadow: inset 1px 1px #fff, inset -1px -1px #35c5ea;
	}

	h2 {
		flex: none;
		height: 29px;
		margin: 1px -5px 0;
		padding: 9px 5px 0;
		background: linear-gradient(#99b4d1, #b9d1ea);
		font-size: 12px;
		font-weight: normal;
	}

	.client {
		display: flex;
		flex: 1;
		flex-direction: column;
		min-height: 0;
		padding: 0 1px;
		background: #f0f0f0;
	}

	.tabs {
		display: flex;
		flex: none;
		align-items: flex-end;
		height: 21px;
		padding-left: 1px;
		border-bottom: 1px solid #dcdcdc;
	}

	.tabs button {
		height: 19px;
		padding: 0 16px 0 5px;
		border: 1px solid #d9d9d9;
		border-bottom: 0;
	}

	.tabs button.on {
		height: 21px;
		padding: 0 19px 1px 7px;
		margin-left: -1px;
		background: #fff;
	}

	.page {
		display: flex;
		flex: 1;
		flex-direction: column;
		min-height: 0;
		padding: 2px 3px 3px;
		border: 1px solid #dcdcdc;
		border-top: 0;
		background: #fff;
	}

	.bar-tools, .bar-info {
		display: flex;
		flex: none;
		align-items: center;
		height: 28px;
		padding-left: 2px;
		background: #f3f3f3;
	}

	.grip {
		width: 2px;
		height: 16px;
		margin-right: 3px;
		border-left: 2px dotted #b4b4b4;
	}

	.bar-tools button {
		height: 24px;
		padding: 0 4px;
		border: 1px solid transparent;
	}

	.bar-tools button.on {
		border-color: #0078d7;
		background: #e0eef9;
	}

	.bar-tools .sep { margin: 0 3px 0 2px; }

	.bar-info label { padding: 0 1px 0 4px; }

	.bar-input {
		display: flex;
		width: 135px;
		height: 25px;
		border: 1px solid #0078d7;
		background: #fff;
	}

	.bar-input input {
		flex: 1;
		padding: 0 2px;
	}

	.bar-input button {
		justify-content: center;
		width: 12px;
		margin: 1px;
		background: #e0eef9;
	}

	.canvas {
		flex: 1;
		width: 100%;
		min-height: 0;
		margin-top: 1px;
		border: 2px solid #f00;
		background: #000;
	}

	.dims {
		font: 24px "Liberation Serif", "Noto Sans CJK SC", serif;
		text-anchor: middle;
		fill: #fff;
	}

	.note {
		text-anchor: start;
		font-weight: 300;
	}

	.origin {
		font: 11px "Liberation Sans", sans-serif;
		fill: #5c5c5c;
	}

	.size {
		font: 7px "Liberation Sans", sans-serif;
		text-anchor: middle;
	}

	.dialog-status {
		display: flex;
		flex: none;
		gap: 2px;
		height: 24px;
		padding-top: 3px;
	}

	.cell {
		flex: 1;
		padding: 2px 2px 0;
		border: 1px solid #d7d7d7;
		background: #f5f5f5;
	}

	.cell:first-child {
		flex: none;
		width: 148px;
		padding-left: 6px;
	}

	.resize {
		align-self: flex-end;
		width: 12px;
		height: 12px;
		margin-left: -16px;
	}

	.marks {
		position: absolute;
		top: -1px;
		left: -1px;
		width: 400px;
		height: 160px;
		overflow: visible;
		pointer-events: none;
	}

	.marks ellipse {
		fill: none;
		stroke: #f00;
		stroke-width: 7px;
	}

	/* status line */
	.status {
		display: grid;
		flex: none;
		grid-template-columns: 148px 78px 98px 48px 1fr 70px;
		gap: 2px;
		height: 20px;
	}

	.status span {
		padding: 1px;
		border: 1px solid #d4d4d4;
		background: #f6f6f6;
	}

	/* taskbar */
	.taskbar {
		display: flex;
		flex: none;
		height: 40px;
		background: #000c11;
		color: #fff;
	}

	.start {
		justify-content: center;
		width: 48px;
		background: #000;
	}

	.start svg {
		width: 16px;
		height: 16px;
	}

	.cortana {
		display: flex;
		align-items: center;
		gap: 4px;
		width: 344px;
		padding: 0 14px 0 8px;
		background: #333;
	}

	.cortana input {
		flex: 1;
		font-size: 14px;
	}

	.cortana input::placeholder { color: #999; }

	.ring {
		width: 24px;
		height: 24px;
	}

	.mic {
		width: 12px;
		height: 16px;
	}

	.pinned {
		display: flex;
		margin-right: 5px;
	}

	.pinned button {
		justify-content: center;
		width: 50px;
	}

	.pinned svg {
		width: 22px;
		height: 22px;
	}

	.running {
		display: flex;
		gap: 1px;
	}

	.running button {
		justify-content: center;
		width: 48px;
		border-bottom: 2px solid transparent;
	}

	.running svg {
		width: 24px;
		height: 24px;
	}

	.open { background: linear-gradient(#76b9ed, #76b9ed) 50% 100% / 40px 2px no-repeat border-box; }

	.running .front {
		border-color: #76b9ed;
		background: #333c40;
	}

	.tray {
		display: flex;
		align-items: center;
		gap: 9px;
		margin-left: auto;
	}

	.tray svg {
		width: 16px;
		height: 16px;
	}

	.tray .keys {
		width: 24px;
		height: 14px;
	}

	time {
		width: 80px;
		margin-left: -2px;
		line-height: 19px;
		text-align: center;
	}

	.notice {
		width: 40px;
		height: 40px;
		margin: 0 3px 0 -2px;
		border-right: 1px solid #555;
	}

	.tray .notice svg {
		width: 24px;
		height: 24px;
	}
</style>
